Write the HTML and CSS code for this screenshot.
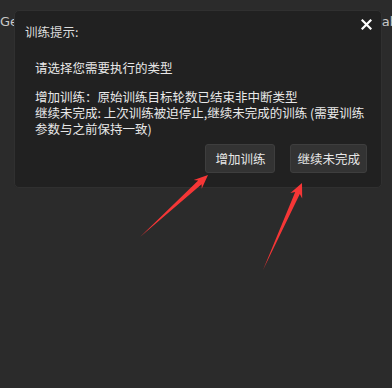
FILE: index.html
```html
<!DOCTYPE html>
<html lang="zh-CN">
<head>
    <meta charset="UTF-8">
    <title>训练提示</title>
    <link rel="stylesheet" href="styles.css">
</head>
<body>

<div class="page">
    <!-- Background content behind the modal -->
    <div class="bg-row">
        <span class="bg-left">Ge<span class="caret"></span></span>
        <span class="bg-right">ab</span>
    </div>

    <!-- Modal -->
    <div class="dialog">
        <div class="dialog-header">
            <span class="dialog-title">训练提示:</span>
            <span class="close-btn">
                <svg width="11" height="11" viewBox="0 0 11 11">
                    <path d="M1.5 1.5 L9.5 9.5 M9.5 1.5 L1.5 9.5" stroke="#ffffff" stroke-width="2.2" stroke-linecap="square"/>
                </svg>
            </span>
        </div>

        <div class="dialog-body">
            <p class="lead">请选择您需要执行的类型</p>
            <p class="detail">增加训练：原始训练目标轮数已结束非中断类型<br>继续未完成: 上次训练被迫停止,继续未完成的训练 (需要训练参数与之前保持一致)</p>
        </div>

        <div class="dialog-actions">
            <button class="btn">增加训练</button>
            <button class="btn">继续未完成</button>
        </div>
    </div>

    <!-- Annotation arrows -->
    <svg class="arrows" width="392" height="388" viewBox="0 0 392 388">
        <polygon fill="#f53636" points="208,175 201.7,188.8 201.6,184.2 140,237 198.2,180.6 193.7,180"/>
        <polygon fill="#f53636" points="302,183 302.2,198.5 299.8,194 263,270 295.2,192 290.4,193.1"/>
    </svg>
</div>

</body>
</html>
```

FILE: styles.css
```css
/* General Styles */
body {
    margin: 0;
    padding: 0;
    background-color: #2b2b2b;
    font-family: "Noto Sans CJK SC", "Noto Sans", sans-serif;
}

.page {
    width: 392px;
    height: 388px;
    position: relative;
    overflow: hidden;
}

.bg-row {
    display: flex;
    justify-content: space-between;
    padding-top: 14px;
    font-family: "DejaVu Sans", sans-serif;
    font-size: 13px;
    line-height: 16px;
    color: #c8c8c8;
}

.bg-left {
    display: flex;
    align-items: center;
}

.caret {
    width: 2px;
    height: 13px;
    margin-left: 1px;
    background-color: #3b82d8;
}

.bg-right {
    margin-right: -6px;
}

/* Modal */
.dialog {
    position: absolute;
    top: 10px;
    left: 14px;
    width: 366px;
    height: 176px;
    background-color: #212121;
    border: 1px solid #303030;
    border-radius: 5px;
    display: flex;
    flex-direction: column;
}

.dialog-header {
    display: flex;
    justify-content: space-between;
    align-items: flex-start;
    padding: 8px 9px 0 10px;
}

.dialog-title {
    margin-top: 5px;
    font-size: 12.5px;
    line-height: 16px;
    color: #dcdcdc;
}

.close-btn {
    display: flex;
    cursor: pointer;
}

.dialog-body {
    padding: 20px 12px 0 20px;
    font-size: 12.5px;
    line-height: 16px;
    color: #e8e8e8;
}

.dialog-body p {
    margin: 0;
}

.dialog-body .detail {
    margin-top: 13px;
}

.dialog-actions {
    display: flex;
    justify-content: flex-end;
    gap: 15px;
    padding: 7px 14px 0 0;
}

.btn {
    min-width: 70px;
    height: 29px;
    padding: 0 6px;
    font-family: "Noto Sans CJK SC", sans-serif;
    font-size: 12.5px;
    color: #e6e6e6;
    background-color: #333333;
    border: 1px solid #3e3e3e;
    border-radius: 3px;
    cursor: pointer;
}

.arrows {
    position: absolute;
    top: 0;
    left: 0;
    pointer-events: none;
}
```
